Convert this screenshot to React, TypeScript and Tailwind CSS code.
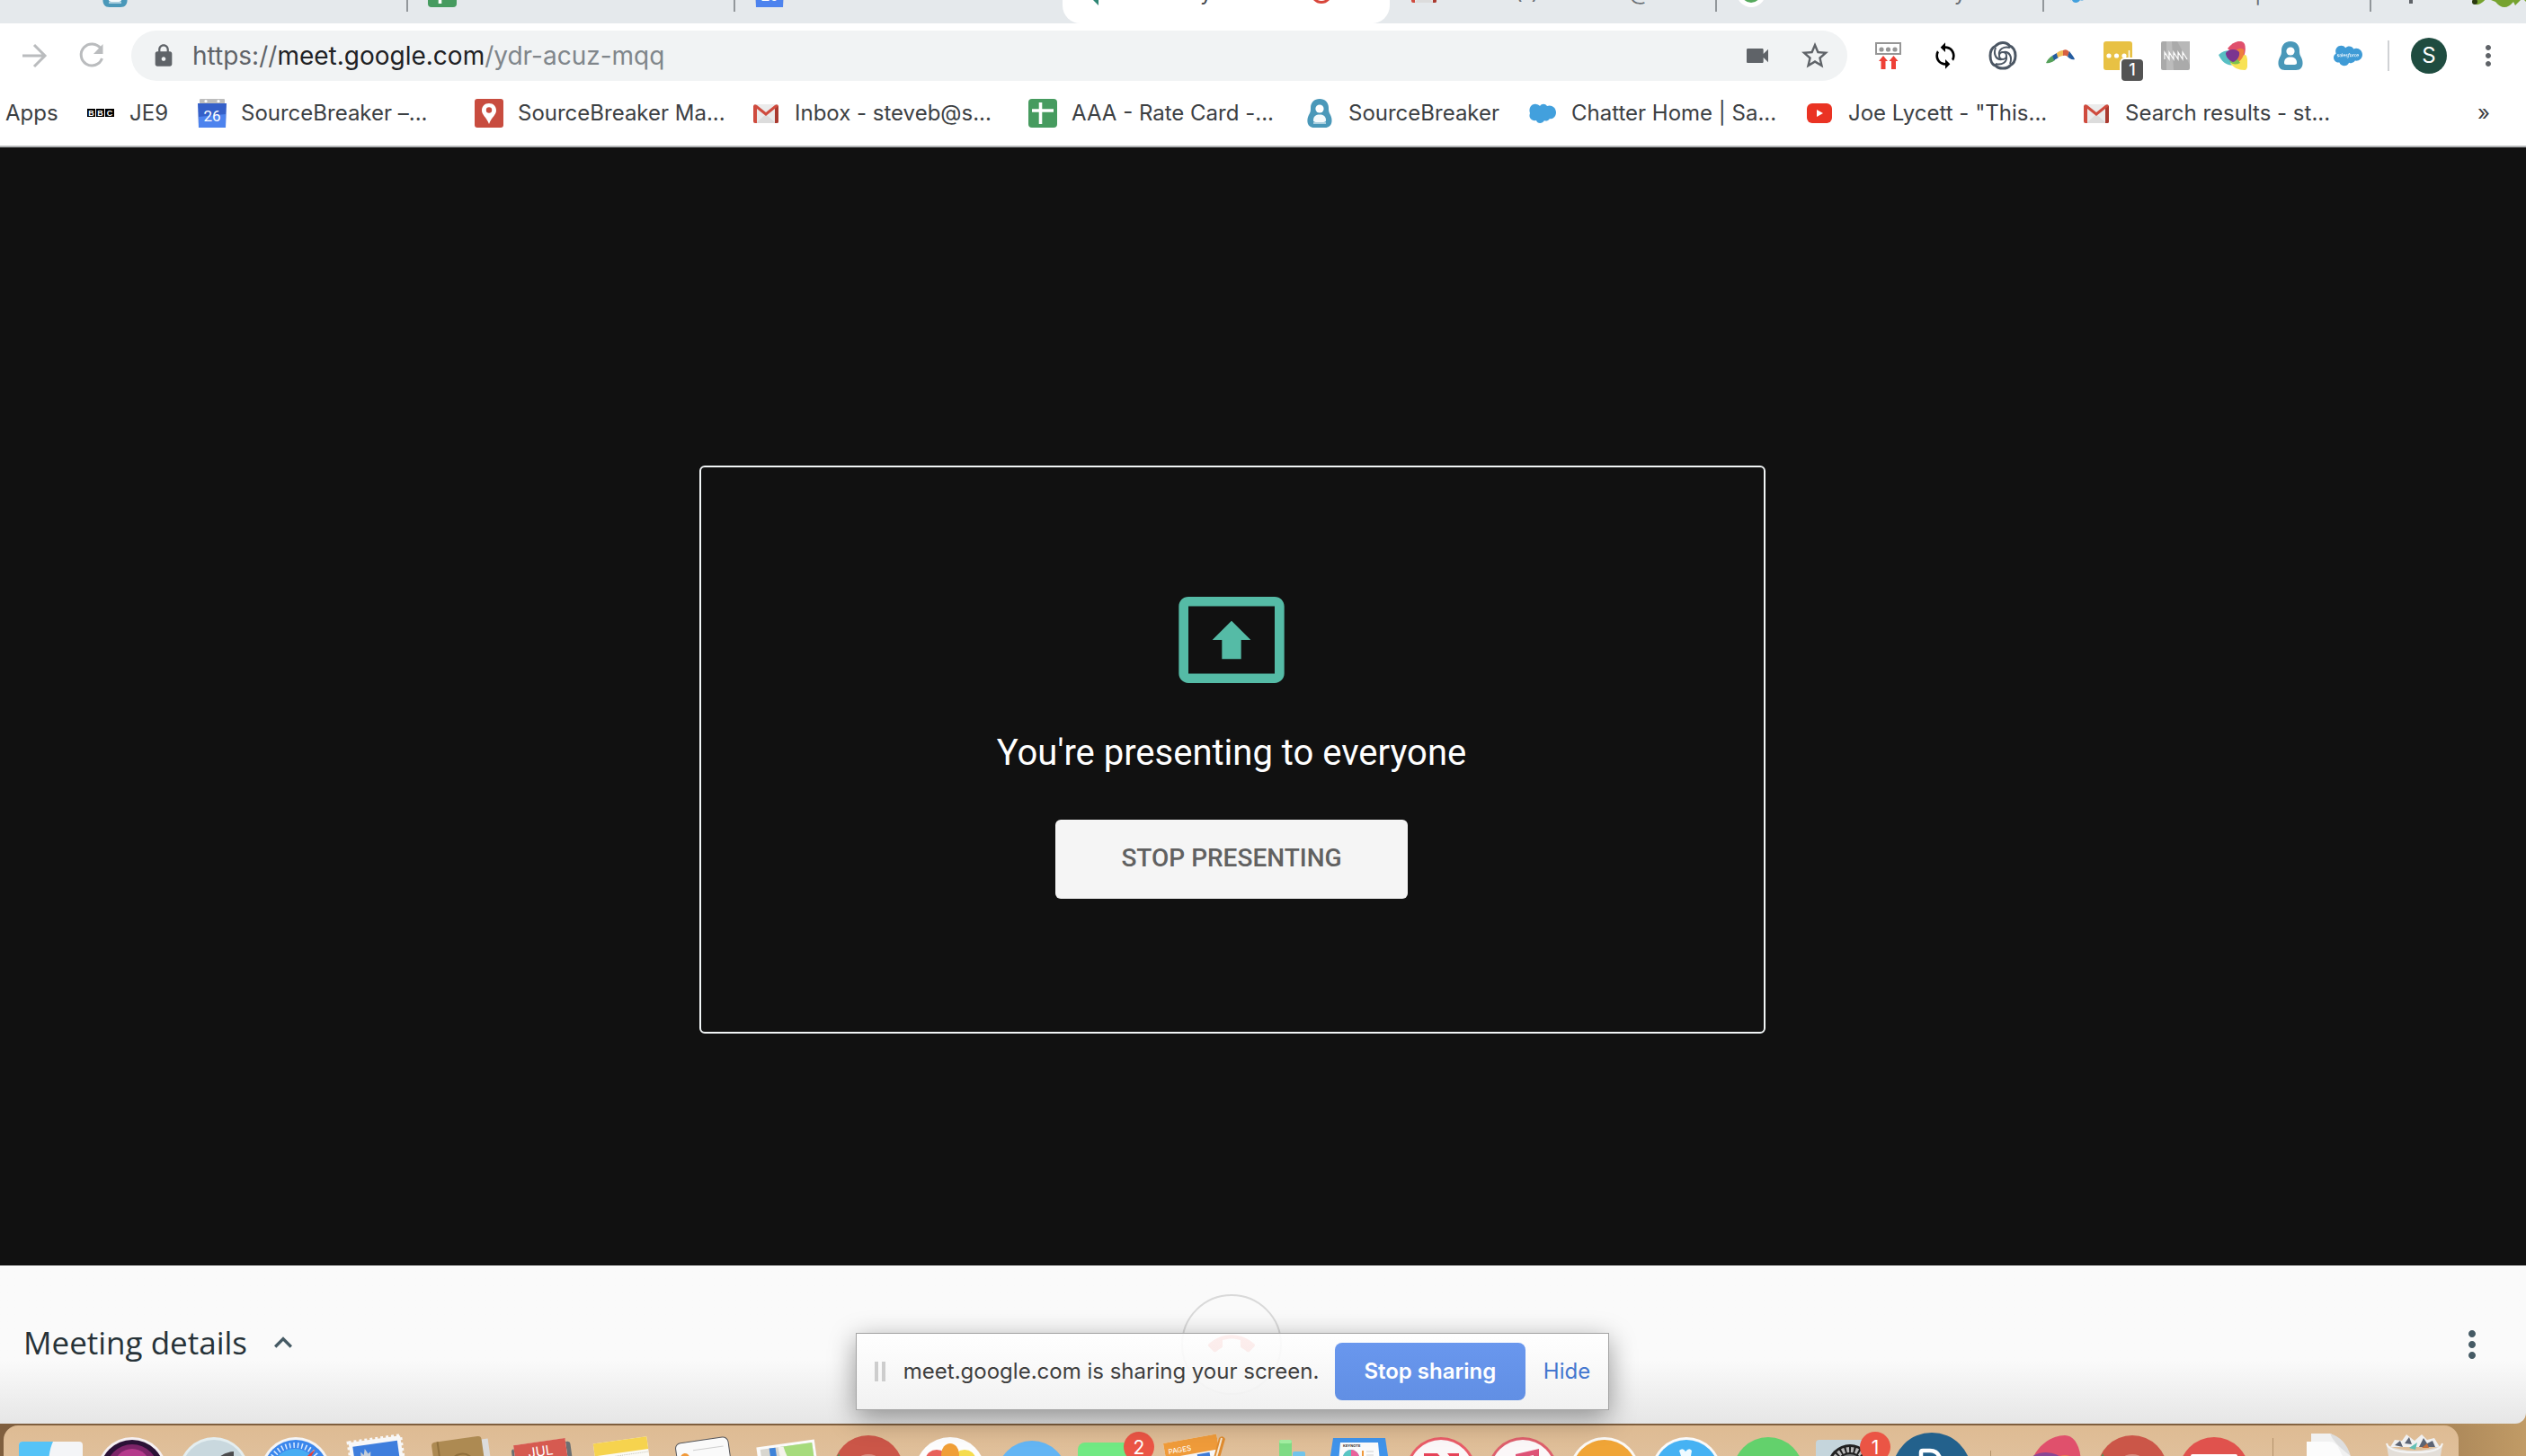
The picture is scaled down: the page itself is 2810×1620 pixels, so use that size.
/*
 * Chrome window with a Google Meet call, sharing bar and the macOS dock
 */

import type { ReactNode } from "react";
import { FaSalesforce } from "react-icons/fa";
import {
  MdCallEnd,
  MdExpandLess,
  MdLock,
  MdMoreVert,
  MdPresentToAll,
  MdStarBorder,
  MdSync,
  MdVideocam,
} from "react-icons/md";

/* ---------- favicons ---------- */

function SourceBreakerIcon({ hollow = false }: { hollow?: boolean }) {
  return (
    <svg viewBox="0 0 32 32" className="size-8 shrink-0">
      <path
        d="M16 0C22 0 26 4 26 10C26 12 26 14 27 16C31 22 31 32 22 32H10C1 32 1 22 5 16C6 14 6 12 6 10C6 4 10 0 16 0Z"
        fill="#4a98b9"
      />
      <circle cx="16" cy="11" r="4.6" fill="#fff" />
      <path d="M9 24C9 19 12 17.500 16 17.500S23 19 23 24C23 26 21 26 16 26S9 26 9 24Z" fill={hollow ? "#fff" : "#f4fafc"} />
      {!hollow && <path d="M9 27H23" stroke="#a9cfdf" strokeWidth="2" />}
    </svg>
  );
}

function SheetsIcon() {
  return (
    <svg viewBox="0 0 32 32" className="size-8 shrink-0">
      <rect width="32" height="32" rx="4" fill="#469b5f" />
      <path d="M13.500 4V28M4 13H28" stroke="#fff" strokeWidth="3.600" />
    </svg>
  );
}

function CalendarIcon() {
  return (
    <svg viewBox="0 0 32 32" className="size-8 shrink-0">
      <rect x="2" width="28" height="8" rx="1" fill="#bdbdbd" />
      <circle cx="9" cy="2.500" r="1.600" fill="#fff" />
      <circle cx="23" cy="2.500" r="1.600" fill="#fff" />
      <path d="M0 5H32L31 32H1Z" fill="#3560c9" />
      <path d="M1 20L31 17V32H1Z" fill="#4d83ee" />
      <text x="16" y="25" textAnchor="middle" fontSize="17" fill="#fff" fontFamily="Roboto, sans-serif">
        26
      </text>
    </svg>
  );
}

function MapsPinIcon() {
  return (
    <svg viewBox="0 0 32 32" className="size-8 shrink-0">
      <rect width="32" height="32" rx="3" fill="#c84c3f" />
      <path d="M16 5C11 5 8 8.500 8 13C8 18 13 20 16 28C19 20 24 18 24 13C24 8.500 21 5 16 5Z" fill="#fff" />
      <circle cx="16" cy="12.500" r="3.200" fill="#c84c3f" />
    </svg>
  );
}

function GmailIcon() {
  return (
    <svg viewBox="0 0 32 32" className="size-8 shrink-0">
      <rect x="2" y="6" width="28" height="21" rx="2" fill="#ebebeb" />
      <path d="M5 27L16 17L27 27Z" fill="#dcdcdc" />
      <path d="M2 8V25Q2 27 4 27H6V11L16 19L26 11V27H28Q30 27 30 25V8Q29 5 26 7L16 15L6 7Q3 5 2 8Z" fill="#cf4b3e" />
      <path d="M26 11V27H28Q30 27 30 25V8Z" fill="#a93a30" />
    </svg>
  );
}

function CloudIcon() {
  return (
    <svg viewBox="0 0 32 32" className="size-8 shrink-0">
      <path
        d="M13 8C15 5 19 5 21 8C25 6 31 9 31 15C31 20 27 23 24 22C22 25 19 25 18 24C16 28 10 28 9 24C4 25 0 21 2 16C0 10 4 5 9 6C11 6 12 7 13 8Z"
        fill="#42a0dd"
      />
    </svg>
  );
}

function YoutubeIcon() {
  return (
    <svg viewBox="0 0 32 32" className="size-8 shrink-0">
      <rect x="2" y="5" width="28" height="22" rx="6" fill="#ea3323" />
      <path d="M13 12V20L20 16Z" fill="#fff" />
    </svg>
  );
}

function BbcIcon() {
  return (
    <svg viewBox="0 0 32 32" className="size-8 shrink-0">
      <path d="M1 11H10V20H1ZM11 11H20V20H11ZM21 11H31V20H21Z" fill="#000" />
      <g fontSize="9" fontWeight="700" fill="#fff" fontFamily="Liberation Sans, sans-serif" textAnchor="middle">
        <text x="5.500" y="19">B</text>
        <text x="15.500" y="19">B</text>
        <text x="26" y="19">C</text>
      </g>
    </svg>
  );
}

/* ---------- tab strip ---------- */

const tabs = [
  { title: "SourceBreaker", icon: <SourceBreakerIcon /> },
  { title: "AAA - Rate Card - Go", icon: <SheetsIcon /> },
  { title: "SourceBreaker – Cal", icon: <CalendarIcon /> },
  {
    title: "Meet – ydr-acuz",
    active: true,
    icon: (
      <svg viewBox="0 0 32 32" className="size-8 shrink-0">
        <path d="M2 0H30V22H18V30L10 22H2Z" fill="#2f8675" />
      </svg>
    ),
  },
  { title: "Inbox (1) - steveb@s", icon: <GmailIcon /> },
  {
    title: "New Release - My fe",
    icon: (
      <svg viewBox="0 0 32 32" className="size-8 shrink-0">
        <circle cx="16" cy="16" r="16" fill="#fff" />
        <circle cx="16" cy="16" r="11" fill="#55a95c" />
      </svg>
    ),
  },
  { title: "Chatter Home | Sale", icon: <CloudIcon /> },
];

function TabStrip() {
  return (
    <div className="flex h-[26px] items-end overflow-hidden bg-[#e5e9ec] pl-[90px]">
      {tabs.map((tab, i) => (
        <div
          key={i}
          className={`flex h-[68px] w-[364px] shrink-0 items-center gap-4 pl-[22px] ${
            tab.active ? "rounded-b-[20px] bg-white" : ""
          }`}
        >
          {tab.icon}
          <span
            className={`text-[24px] leading-8 whitespace-nowrap ${
              tab.active ? "w-[190px] text-[#45494d]" : "w-[250px] text-[#6b7075]"
            }`}
          >
            {tab.title}
          </span>
          {tab.active && <span className="size-6 rounded-full border-3 border-[#d8463b]" />}
          {!tab.active && i !== 2 && <span className="ml-auto h-[42px] w-0.5 bg-[#92979b]" />}
        </div>
      ))}
      <div className="flex h-[68px] flex-1 items-center justify-between pl-8">
        <svg viewBox="0 0 24 24" className="size-6">
          <path d="M12 0V24M0 12H24" stroke="#5f6368" strokeWidth="4" />
        </svg>
        <svg viewBox="0 0 64 40" className="h-10 w-16">
          <path d="M2 16L6 32Q12 36 20 26L30 30Q40 42 50 30L52 34L60 26L64 30V0H8Z" fill="#76a32f" />
          <circle cx="7" cy="30" r="3" fill="#2b3a10" />
        </svg>
      </div>
    </div>
  );
}

/* ---------- toolbar ---------- */

const extensions: { name: string; icon: ReactNode }[] = [
  {
    name: "Uploader",
    icon: (
      <svg viewBox="0 0 32 32" className="size-8">
        <rect x="3" y="2" width="27" height="12" fill="none" stroke="#969696" strokeWidth="2" />
        <g fill="#969696">
          <circle cx="9" cy="9" r="2.600" />
          <circle cx="16.500" cy="9" r="2.600" />
          <circle cx="24" cy="9" r="2.600" />
        </g>
        <path d="M11 16L16 22H13.500V31H8.500V22H6ZM22.500 16L27.500 22H25V31H20V22H17.500Z" fill="#ee4036" />
      </svg>
    ),
  },
  { name: "Sync", icon: <MdSync className="size-8 text-black" /> },
  {
    name: "Swirl",
    icon: (
      <svg viewBox="0 0 32 32" className="size-8" fill="none" stroke="#4b5663">
        <path
          d="M16 1.500C20 1.500 22 3 23.500 5C27 6 30 10 30 16C30 21 28 25 24 27C21 31 11 31 8 27C4 26 2 21 2 16C2 10 4 7 8 5C10 3 12 1.500 16 1.500Z"
          strokeWidth="3"
        />
        <circle cx="16" cy="16" r="4" strokeWidth="2" />
        <path
          d="M12 15C11 9 17 5 24 7M17 12C23 11 27 17 24 25M20 17C21 23 15 27 8 25M15 20C9 21 5 15 8 7"
          strokeWidth="2"
        />
      </svg>
    ),
  },
  {
    name: "Boomerang",
    icon: (
      <svg viewBox="0 0 32 32" className="size-8">
        <path d="M0 24C2 20 4 18 7 16L10 21C7 23 3 25 0 24Z" fill="#55a05a" />
        <path d="M7 16L12 13L14 18L9 21Z" fill="#235b9f" />
        <path d="M12 13C14 11 17 10 19 10V16C17 16 15 17 13 18Z" fill="#f2bd58" />
        <path d="M19 10C22 8 25 10 26 12L24 17Q22 15 19 16Z" fill="#d8603f" />
        <path d="M26 11C28 14 31 17 32 20C29 21 26 19 24 17Z" fill="#235b9f" />
      </svg>
    ),
  },
  {
    name: "Notes",
    icon: (
      <span className="relative block size-8">
        <svg viewBox="0 0 32 32" className="size-8">
          <rect width="32" height="32" rx="3" fill="#e8c144" />
          <g fill="#fff">
            <circle cx="6" cy="16" r="2.600" />
            <circle cx="14.500" cy="16" r="2.600" />
            <circle cx="23" cy="16" r="2.600" />
          </g>
          <path d="M28.500 10V20" stroke="#fff" strokeWidth="1.500" />
        </svg>
        <span className="absolute top-[18px] left-[18px] flex h-[28px] w-7 items-center justify-center rounded-md border-2 border-white bg-[#535353] text-[18px] leading-6 font-medium text-white">
          1
        </span>
      </span>
    ),
  },
  {
    name: "Waves",
    icon: (
      <svg viewBox="0 0 32 32" className="size-8">
        <rect width="32" height="32" rx="2" fill="#aaaaaa" />
        <path d="M6 0H12L14 32H6Z" fill="#bcbcbc" />
        <path d="M18 0L32 26V0Z" fill="#b8b8b8" />
        <path d="M4 20V12L9 20V12L14 20V12L19 20V12L24 20V12L29 20" stroke="#fff" strokeWidth="1.200" fill="none" />
      </svg>
    ),
  },
  {
    name: "Colours",
    icon: (
      <svg viewBox="0 0 32 32" className="size-8">
        <path d="M10 8C16 0 26 -3 29 3C31 9 29 16 26 22Z" fill="#e0506c" />
        <path d="M0 15C8 8 16 10 20 14L22 24C12 30 4 24 0 15Z" fill="#58bfc4" />
        <path d="M13 24C22 22 28 12 31 16C33 22 33 32 29 32C22 32 16 29 13 24Z" fill="#f8e255" />
        <path d="M20 24C26 21 29 16 28 9Q22 6 18 12Z" fill="#ee7f3c" />
        <path d="M12 22Q17 28 24 24L20 18Z" fill="#7fc14e" />
        <path d="M8 13C11 8 20 8 23 12C24 17 20 22 16 23C11 21 8 17 8 13Z" fill="#7b3590" />
      </svg>
    ),
  },
  { name: "SourceBreaker", icon: <SourceBreakerIcon hollow /> },
  { name: "Salesforce", icon: <FaSalesforce className="size-8 text-[#3f9bd6]" /> },
];

function Toolbar() {
  return (
    <div className="flex h-[72px] items-center bg-white pr-6 pl-[22px] text-[#5f6368]">
      <button aria-label="Forward" className="mr-8">
        <svg viewBox="0 0 32 32" className="size-8" fill="none" stroke="#babcbe" strokeWidth="3">
          <path d="M3 16H28M16 4L28 16L16 28" />
        </svg>
      </button>
      <button aria-label="Reload" className="mr-7">
        <svg viewBox="0 0 32 32" className="size-8">
          <path d="M26 8A12 12 0 1 0 27.500 19" fill="none" stroke="#babcbe" strokeWidth="3" />
          <path d="M28.500 3V14H18Z" fill="#babcbe" />
        </svg>
      </button>
      <div className="flex h-14 flex-1 items-center rounded-full bg-[#f1f3f4] pr-[18px] pl-[22px]">
        <MdLock className="mr-[18px] size-7 shrink-0" />
        <a href="https://meet.google.com/ydr-acuz-mqq" className="flex-1 text-[28px] leading-9 text-[#80868b]">
          <span className="text-[#5f6368]">https://</span>
          <span className="text-[#202124]">meet.google.com</span>/ydr-acuz-mqq
        </a>
        <button aria-label="Camera in use" className="mr-[30px]">
          <MdVideocam className="size-8" />
        </button>
        <button aria-label="Bookmark this page">
          <MdStarBorder className="size-9" />
        </button>
      </div>
      <div className="ml-[29px] flex items-center gap-8">
        {extensions.map((ext) => (
          <button key={ext.name} aria-label={ext.name} className="size-8">
            {ext.icon}
          </button>
        ))}
      </div>
      <div className="ml-7 h-[34px] w-0.5 bg-[#d0d2d5]" />
      <button className="ml-6 size-10 rounded-full bg-[#1f4c40] text-[24px] leading-10 text-white">S</button>
      <button aria-label="Menu" className="ml-7">
        <MdMoreVert className="size-9" />
      </button>
    </div>
  );
}

const bookmarks: { title: string; icon: ReactNode; width: string }[] = [
  { title: "JE9", icon: <BbcIcon />, width: "w-[124px]" },
  { title: "SourceBreaker –...", icon: <CalendarIcon />, width: "w-[308px]" },
  { title: "SourceBreaker Ma...", icon: <MapsPinIcon />, width: "w-[308px]" },
  { title: "Inbox - steveb@s...", icon: <GmailIcon />, width: "w-[308px]" },
  { title: "AAA - Rate Card -...", icon: <SheetsIcon />, width: "w-[308px]" },
  { title: "SourceBreaker", icon: <SourceBreakerIcon />, width: "w-[248px]" },
  { title: "Chatter Home | Sa...", icon: <CloudIcon />, width: "w-[308px]" },
  { title: 'Joe Lycett - "This...', icon: <YoutubeIcon />, width: "w-[308px]" },
  { title: "Search results - st...", icon: <GmailIcon />, width: "w-[308px]" },
];

function BookmarksBar() {
  return (
    <nav className="flex h-[66px] items-center border-b-2 border-[#b4b6b8] bg-white pr-10 pb-2 pl-1.5 text-[24px] leading-8 text-[#3c4043]">
      <a href="#apps" className="w-[90px]">
        Apps
      </a>
      {bookmarks.map((b, i) => (
        <a key={i} href="#bookmark" className={`flex shrink-0 items-center gap-4 whitespace-nowrap ${b.width}`}>
          {b.icon}
          {b.title}
        </a>
      ))}
      <button className="ml-auto" aria-label="More bookmarks">
        »
      </button>
    </nav>
  );
}

/* ---------- meeting ---------- */

function Presenting() {
  return (
    <main className="flex flex-1 items-center justify-center bg-[#111111] pt-24 pr-[68px] font-['Roboto',sans-serif]">
      <section className="flex w-[1186px] flex-col items-center rounded-md border-2 border-[#f1f5f6] pt-32 pr-0.5 pb-[148px]">
        <MdPresentToAll className="size-32 text-[#55bba6]" />
        <h1 className="mt-[38px] text-[40px] leading-12 text-white">You're presenting to everyone</h1>
        <button className="mt-[50px] h-[88px] w-[392px] rounded-md bg-[#f5f5f5] pb-0.5 text-[28px] font-medium text-[#616161]">
          STOP PRESENTING
        </button>
      </section>
    </main>
  );
}

function SharingBar() {
  return (
    <div className="absolute inset-x-0 bottom-[15px] flex justify-center pr-[68px]">
      <div className="flex h-[86px] items-center border border-[#a3a3a3] bg-linear-to-b from-white/90 to-[#f2f2f2]/90 px-5 text-[24px] text-[#3e3e3e] shadow-[0_8px_30px_rgba(0,0,0,0.4)]">
        <span className="mr-5 h-[22px] w-3 border-x-4 border-[#cdcdcd]" />
        <span className="w-[480px] whitespace-nowrap">meet.google.com is sharing your screen.</span>
        <button className="h-16 w-[212px] rounded-lg bg-linear-to-b from-[#6997ee] to-[#618fe4] font-semibold text-white">
          Stop sharing
        </button>
        <button className="ml-5 text-[#4577cf]">Hide</button>
      </div>
    </div>
  );
}

function MeetingFooter() {
  return (
    <footer className="relative flex h-44 items-center rounded-br-xl bg-linear-to-b from-[#fafafa] from-60% to-[#e6e6e6]">
      <div className="flex-1 pl-[26px]">
        <button className="flex items-center gap-5 pb-1 font-['Open_Sans',sans-serif] text-[35px] text-[#263238]">
          Meeting details
          <MdExpandLess className="size-10 text-[#455a64]" />
        </button>
      </div>
      <button
        aria-label="Leave call"
        className="flex size-28 items-center justify-center rounded-full border-2 border-[#d9d9d9] bg-[#fafafa]"
      >
        <MdCallEnd className="size-[52px] text-[#f05a50]" />
      </button>
      <div className="flex flex-1 justify-end pr-9 pl-[60px]">
        <button aria-label="More options">
          <MdMoreVert className="size-12 text-[#455a64]" />
        </button>
      </div>
      <SharingBar />
    </footer>
  );
}

/* ---------- dock ---------- */

function Disc({ top, fill, ring, children }: { top: number; fill: string; ring?: string; children?: ReactNode }) {
  return (
    <>
      <circle cx="46" cy={top + 39} r="39" fill={ring ?? fill} />
      {ring && <circle cx="46" cy={top + 39} r="36" fill={fill} />}
      {children}
    </>
  );
}

function Badge({ count }: { count: number }) {
  return (
    <>
      <circle cx="74" cy="24" r="17" fill="#eb5545" />
      <text x="74" y="32" textAnchor="middle" fontSize="21" fill="#fff" fontFamily="Inter, sans-serif">
        {count}
      </text>
    </>
  );
}

const chrome = (
  <Disc top={11} fill="#cb5648">
    <path d="M10 40L13 31L17 40Z" fill="#3f9a57" />
    <circle cx="46" cy="50" r="18" fill="#d98f80" />
  </Disc>
);

const dockApps: ReactNode[] = [
  // Finder
  <>
    <rect x="11" y="18" width="71" height="40" rx="4" fill="#f4f5f7" />
    <path d="M15 18H49Q45 26 44 40H11V22Q11 18 15 18Z" fill="#55c3f7" />
  </>,
  // Siri
  <Disc top={13} fill="#2b1136" ring="#f6f0f2">
    <circle cx="46" cy="50" r="29" fill="#7d2468" />
    <circle cx="46" cy="46" r="20" fill="#b53a8c" />
  </Disc>,
  // Launchpad
  <Disc top={13} fill="#c9d8de" ring="#e4eef0">
    <path d="M48 40Q54 30 68 29V40Z" fill="#4b4b4d" />
  </Disc>,
  // Safari
  <Disc top={13} fill="#3a86ec" ring="#f5f5f6">
    <circle cx="45" cy="52" r="30" fill="none" stroke="#dcecff" strokeWidth="6" strokeDasharray="1.500 3" />
    <circle cx="45" cy="52" r="26" fill="#47adf3" />
    <path d="M52 40L68 26L60 40Z" fill="#e2403a" />
  </Disc>,
  // Mail
  <g transform="rotate(-8 46 34)">
    <rect x="16" y="15" width="58" height="60" fill="#f8f8f8" stroke="#f8f8f8" strokeWidth="4" strokeDasharray="3 3" />
    <rect x="20" y="20" width="50" height="50" fill="#3e7edd" />
    <path d="M27 40L28 27L31 31L33 24L36 30L39 28L37 42Z" fill="#c4ccd6" />
  </g>,
  // Contacts
  <g transform="rotate(-8 46 34)">
    <rect x="22" y="19" width="58" height="50" fill="#dcdcdc" />
    <rect x="17" y="15" width="56" height="50" rx="4" fill="#ad8a52" />
    <path d="M24 15V60" stroke="#91713d" strokeWidth="2" />
    <circle cx="48" cy="46" r="14" fill="none" stroke="#91713d" strokeWidth="2" />
  </g>,
  // Calendar
  <g transform="rotate(-8 46 34)">
    <rect x="14" y="22" width="66" height="40" rx="3" fill="#6b6f72" />
    <rect x="17" y="18" width="58" height="50" rx="2" fill="#f5f5f5" />
    <path d="M17 18H75V38H17Z" fill="#d65a50" />
    <text x="46" y="34" textAnchor="middle" fontSize="15" fill="#fff" fontFamily="Inter, sans-serif">
      JUL
    </text>
  </g>,
  // Notes
  <g transform="rotate(-8 46 34)">
    <rect x="15" y="16" width="60" height="50" fill="#fbfaf5" />
    <rect x="15" y="16" width="60" height="14" fill="#f6d34e" />
    <path d="M17 33H74" stroke="#c5c2b8" strokeDasharray="1 1" />
  </g>,
  // Reminders
  <g transform="rotate(-8 46 34)">
    <rect x="15" y="16" width="59" height="60" rx="6" fill="#fafafa" stroke="#55565a" strokeWidth="1" />
    <circle cx="24" cy="33" r="5" fill="#f19a3b" />
    <path d="M34 26H68M34 40H68" stroke="#cfcfcf" />
  </g>,
  // Maps
  <g transform="rotate(-8 46 34)">
    <rect x="14" y="20" width="65" height="50" fill="#fbfbfb" />
    <rect x="18" y="23" width="58" height="50" fill="#d8d6cf" />
    <path d="M28 23H35V60H28Z" fill="#3f83d8" />
    <path d="M40 23H76V60H52Q42 40 40 23Z" fill="#a6db7c" />
    <path d="M38 23H44Q47 42 56 50H40Z" fill="#f5f3ec" />
  </g>,
  chrome,
  // Photos
  <Disc top={13} fill="#fdfdfd">
    <ellipse cx="31" cy="37" rx="12" ry="10" fill="#e8615a" />
    <ellipse cx="62" cy="37" rx="12" ry="10" fill="#f5dc4e" />
    <ellipse cx="46" cy="32" rx="10" ry="12" fill="#f09f37" />
  </Disc>,
  // Messages
  <Disc top={17} fill="#63b5f4" />,
  // FaceTime
  <>
    <rect x="6" y="19" width="72" height="50" rx="8" fill="#71e983" />
    <Badge count={2} />
  </>,
  // Pages
  <>
    <g transform="rotate(-10 46 34)">
      <rect x="13" y="14" width="60" height="60" fill="#f7f7f7" />
      <rect x="13" y="14" width="60" height="17" fill="#ef9b3a" />
      <text x="17" y="27" fontSize="8" fill="#fff" fontFamily="Inter, sans-serif">
        PAGES
      </text>
      <path d="M34 37H44M48 34H62M48 37H62" stroke="#3f7bd6" strokeWidth="3" />
    </g>
    <path d="M66 36L72 14Q76 10 79 15L73 36Z" fill="#df8b2f" />
    <path d="M69 36L75 14" stroke="#f6e6cf" strokeWidth="2" />
  </>,
  // Numbers
  <>
    <rect x="48" y="16" width="14" height="30" rx="2" fill="#7edb84" />
    <rect x="48" y="16" width="14" height="4" rx="2" fill="#a3efa2" />
    <rect x="63" y="29" width="14" height="20" rx="2" fill="#71c4ea" />
  </>,
  // Keynote
  <>
    <path d="M17 14H75L79 40H13Z" fill="#3f93ea" />
    <path d="M25 19H67L69 40H23Z" fill="#fbfbfb" />
    <text x="28" y="24" fontSize="4" fontWeight="700" fill="#333" fontFamily="Inter, sans-serif">
      KEYNOTE
    </text>
    <circle cx="37" cy="36" r="9" fill="#5b8ae0" />
    <path d="M37 36V27A9 9 0 0 1 46 36Z" fill="#e9619a" />
    <path d="M37 36H28A9 9 0 0 1 37 27Z" fill="#58c6c2" />
    <path d="M50 28V40" stroke="#f0993c" strokeWidth="2" />
    <path d="M54 29H62M54 33H62" stroke="#cfcfcf" />
  </>,
  // News
  <Disc top={13} fill="#fbf7f8" ring="#e95c68">
    <path d="M27 31H42L50 40H27ZM53 31H66V40H60Z" fill="#e64358" />
  </Disc>,
  // Music
  <Disc top={13} fill="#fbf7f8" ring="#de5f6c">
    <path d="M38 32L64 26V40H58V33L44 36V40H38Z" fill="#de5377" />
  </Disc>,
  // Books
  <Disc top={13} fill="#f0a537" ring="#fbf9f6">
    <path d="M38 40Q40 33 46 35Q52 33 56 40Z" fill="#e79a2c" />
  </Disc>,
  // App Store
  <Disc top={13} fill="#46b2f3" ring="#fafafa">
    <path d="M38 28Q42 24 45 29Q49 24 52 28L50 40H42Z" fill="#eefaff" />
  </Disc>,
  <Disc top={13} fill="#63d16c">
    <path d="M37 40Q46 30 55 40Z" fill="#4fbf5a" />
  </Disc>,
  // System preferences
  <>
    <rect x="8" y="16" width="66" height="50" rx="4" fill="#c5d5dc" />
    <circle cx="46" cy="46" r="25" fill="#202020" />
    <circle cx="46" cy="46" r="19" fill="none" stroke="#b8b8b8" strokeWidth="6" strokeDasharray="3 2" />
    <circle cx="46" cy="46" r="14" fill="#77797a" />
    <Badge count={1} />
  </>,
  <>
    <circle cx="46" cy="52" r="44" fill="#23618c" />
    <path d="M34 40V30Q34 28 36 28H44Q54 28 56 40" fill="none" stroke="#fff" strokeWidth="4.500" />
  </>,
];

const dockRecent: ReactNode[] = [
  <>
    <path d="M25 40C30 24 46 11 62 11C72 11 79 22 80 40Z" fill="#e0506c" />
    <ellipse cx="41" cy="40" rx="18" ry="10" fill="#8a4794" />
    <ellipse cx="62" cy="40" rx="10" ry="7" fill="#ee7f4c" />
  </>,
  chrome,
  <Disc top={13} fill="#e0524d">
    <rect x="20" y="32" width="52" height="8" rx="2" fill="#fff" />
  </Disc>,
];

const dockFiles: ReactNode[] = [
  // Documents
  <>
    <path d="M22 9H44L66 34H22Z" fill="#f1f1f1" />
    <path d="M17 18H42Q50 18 53 26L58 36H17Z" fill="#fcfcfc" />
    <path d="M43 9Q47 20 66 34Q60 14 43 9Z" fill="#dedede" />
  </>,
  // Trash
  <>
    <path d="M19 24L24 16L32 17L37 10L46 17L54 10L60 16L68 14L74 24Z" fill="#f0f0f0" />
    <path d="M24 22L30 17L33 24ZM35 20L40 13L43 21ZM51 24L56 14L60 20L66 17L69 24Z" fill="#5c6474" />
    <path d="M40 25L49 19L47 27Z" fill="#62bfb5" />
    <path d="M54 25L60 20L62 25Z" fill="#c7703a" />
    <path d="M15 22Q46 34 77 22L74 40H18Z" fill="#e3e3e3" fillOpacity="0.850" />
    <path d="M15 20Q17 30 46 30T77 20" fill="none" stroke="#f5f5f5" strokeWidth="2" />
  </>,
];

function DockGroup({ items }: { items: ReactNode[] }) {
  return (
    <>
      {items.map((item, i) => (
        <svg key={i} viewBox="0 0 91 34" className="h-[34px] w-[91px] shrink-0">
          {item}
        </svg>
      ))}
    </>
  );
}

function Dock() {
  return (
    <div className="flex h-9 overflow-hidden pt-0.5 pl-1">
      <div className="flex rounded-t-2xl bg-linear-to-b from-[#debb93] to-[#e0c09b] pr-1 pl-1.5">
        <DockGroup items={dockApps} />
        <div className="mx-5 mt-7 w-px bg-[#b3926b]" />
        <DockGroup items={dockRecent} />
        <div className="mx-5 mt-3.5 w-px bg-[#b3926b]" />
        <DockGroup items={dockFiles} />
      </div>
    </div>
  );
}

export default function App() {
  return (
    <div className="flex min-h-screen flex-col overflow-hidden bg-linear-to-r from-[#7f5f3f] from-90% to-[#c19b66] font-['Inter',sans-serif]">
      <header>
        <TabStrip />
        <Toolbar />
        <BookmarksBar />
      </header>
      <Presenting />
      <MeetingFooter />
      <Dock />
    </div>
  );
}
